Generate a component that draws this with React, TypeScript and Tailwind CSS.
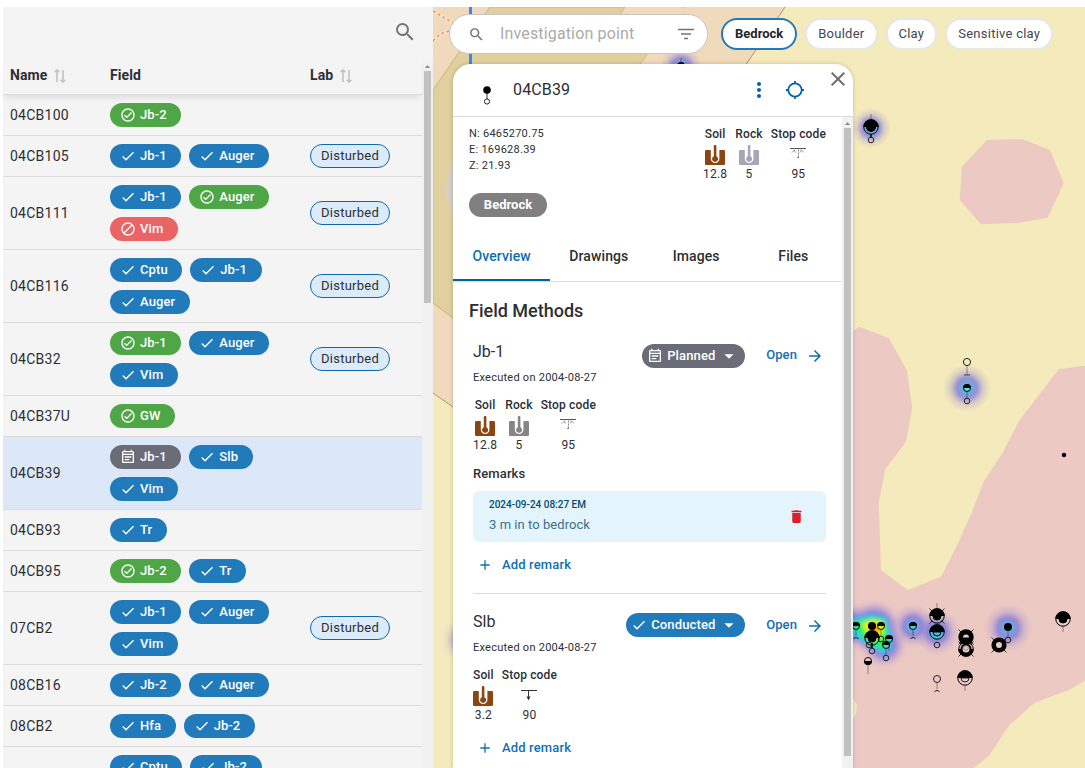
import React from "react";
import {
  MdSearch,
  MdCheck,
  MdOutlineEventNote,
  MdOutlineCheckCircle,
  MdArrowDropDown,
  MdArrowForward,
  MdAdd,
  MdDelete,
  MdClose,
  MdMoreVert,
} from "react-icons/md";

type Status = "done" | "approved" | "planned" | "rejected";
type Method = { label: string; status: Status };
type Row = { name: string; field: Method[]; lab?: string; selected?: boolean };

const m = (label: string, status: Status = "done"): Method => ({ label, status });

const rows: Row[] = [
  { name: "04CB100", field: [m("Jb-2", "approved")] },
  { name: "04CB105", field: [m("Jb-1"), m("Auger")], lab: "Disturbed" },
  { name: "04CB111", field: [m("Jb-1"), m("Auger", "approved"), m("Vim", "rejected")], lab: "Disturbed" },
  { name: "04CB116", field: [m("Cptu"), m("Jb-1"), m("Auger")], lab: "Disturbed" },
  { name: "04CB32", field: [m("Jb-1", "approved"), m("Auger"), m("Vim")], lab: "Disturbed" },
  { name: "04CB37U", field: [m("GW", "approved")] },
  { name: "04CB39", field: [m("Jb-1", "planned"), m("Slb"), m("Vim")], selected: true },
  { name: "04CB93", field: [m("Tr")] },
  { name: "04CB95", field: [m("Jb-2", "approved"), m("Tr")] },
  { name: "07CB2", field: [m("Jb-1"), m("Auger"), m("Vim")], lab: "Disturbed" },
  { name: "08CB16", field: [m("Jb-2"), m("Auger")] },
  { name: "08CB2", field: [m("Hfa"), m("Jb-2")] },
];

const lastRow: Method[] = [m("Cptu"), m("Jb-2")];

const chipColor: Record<Status, string> = {
  done: "bg-[#217bbb]",
  approved: "bg-[#4fa646]",
  planned: "bg-[#6a6d78]",
  rejected: "bg-[#ea6365]",
};

function StatusIcon({ status }: { status: Status }) {
  if (status === "done") return <MdCheck size={16} className="shrink-0" />;
  if (status === "approved") return <MdOutlineCheckCircle size={16} className="shrink-0" />;
  if (status === "planned") return <MdOutlineEventNote size={16} className="shrink-0" />;
  return (
    <svg viewBox="0 0 24 24" className="size-4 shrink-0" fill="currentColor">
      <path d="M12 2C6.500 2 2 6.500 2 12s4.500 10 10 10 10-4.500 10-10S17.500 2 12 2zM4 12c0-4.400 3.600-8 8-8 1.800 0 3.500.6 4.900 1.700L5.700 16.900C4.600 15.500 4 13.800 4 12zm8 8c-1.800 0-3.500-.6-4.900-1.700L18.300 7.100C19.400 8.500 20 10.200 20 12c0 4.400-3.600 8-8 8z" />
    </svg>
  );
}

function MethodChip({ label, status }: Method) {
  return (
    <span className={`flex h-6 items-center gap-1 rounded-full pl-2.5 pr-[14.5px] text-[13px] font-medium tracking-[0.1px] text-white ${chipColor[status]}`}>
      <StatusIcon status={status} />
      <span>{label}</span>
    </span>
  );
}

function SortIcon() {
  return (
    <svg viewBox="0 0 12 14" className="mt-[3px] h-3.5 w-3" fill="none" stroke="#c2c2c2" strokeWidth="1.6">
      <path d="M3 13V2M0.600 3.200L3 1l2.400 2.200M9 1v11M6.600 10.800L9 13l2.400-2.200" />
    </svg>
  );
}

function Scrollbar({ thumb }: { thumb: string }) {
  return (
    <div className="flex w-[11px] shrink-0 flex-col items-center bg-[#f1f1f1]">
      <svg viewBox="0 0 11 11" className="size-[11px] shrink-0">
        <path d="M3 8h5L5.500 5z" fill="#8a8a8a" />
      </svg>
      <div className={`w-[7px] bg-[#c1c1c1] ${thumb}`} />
    </div>
  );
}

function PointTable() {
  return (
    <aside className="flex h-full w-[430px] shrink-0 flex-col bg-[#f4f4f4]">
      <div className="flex h-[53px] shrink-0 justify-end pr-4 pt-[13px]">
        <MdSearch size={24} color="#757575" />
      </div>
      <div className="flex min-h-0 flex-1">
        <div className="flex min-w-0 flex-1 flex-col">
          <div className="relative z-10 flex h-[35px] shrink-0 items-center border-b border-[#dcdcdc] pb-[5px] text-sm font-bold tracking-[0.1px] text-[#2c2f33] shadow-[0_5px_6px_-2px_rgba(0,0,0,0.09)]">
            <div className="flex w-[107px] items-center gap-[7px] pl-[7px]">Name <SortIcon /></div>
            <div className="w-[200px]">Field</div>
            <div className="flex items-center gap-[7px]">Lab <SortIcon /></div>
          </div>
          <div className="min-h-0 flex-1 overflow-hidden">
            {rows.map((r) => (
              <div key={r.name} className={`flex items-center border-b border-[#dcdcdc] py-2 ${r.selected ? "bg-[#dce8f8]" : ""}`}>
                <div className="w-[107px] pb-px pl-[7px] text-sm leading-5 tracking-[0.25px] text-[#2c2f33]">{r.name}</div>
                <div className="flex w-[200px] flex-wrap gap-2 pr-4">
                  {r.field.map((f) => <MethodChip key={f.label} {...f} />)}
                </div>
                {r.lab && (
                  <span className="flex h-6 w-20 items-center justify-center rounded-full border border-[#1068a8] bg-[#dcebf9] text-[13px] tracking-[0.25px] text-[#2c2f33]">
                    {r.lab}
                  </span>
                )}
              </div>
            ))}
            <div className="flex gap-2 py-2 pl-[107px]">
              {lastRow.map((f) => <MethodChip key={f.label} {...f} />)}
            </div>
          </div>
        </div>
        <Scrollbar thumb="h-[232px]" />
      </div>
    </aside>
  );
}

type Glow = [number, number, number];
const glows: Glow[] = [
  [871, 128, 20], [967, 388, 24], [913, 626, 22], [937, 632, 23], [1008, 628, 24], [681, 67, 21],
];

function Half({ x, y, r, flip, fill = "none" }: { x: number; y: number; r: number; flip?: boolean; fill?: string }) {
  return (
    <g>
      <circle cx={x} cy={y} r={r - 0.5} fill={fill} stroke="#000" strokeWidth="1" />
      <path d={`M${x - r} ${y}A${r} ${r} 0 0 ${flip ? 0 : 1} ${x + r} ${y}Z`} fill="#000" />
    </g>
  );
}

function Ring({ x, y, r = 2.8 }: { x: number; y: number; r?: number }) {
  return <circle cx={x} cy={y} r={r} fill="none" stroke="#222" strokeWidth="1" />;
}

function Stem({ x, y1, y2 }: { x: number; y1: number; y2: number }) {
  return <path d={`M${x} ${y1}V${y2}`} stroke="#000" strokeOpacity="0.25" strokeWidth="1.500" />;
}

function Big({ x, y, fill = "none" }: { x: number; y: number; fill?: string }) {
  return (
    <g>
      <Half x={x} y={y} r={7.7} fill={fill} />
      <path d={`M${x - 4} ${y}a4 4 0 0 0 8 0z`} fill={fill === "none" ? "#000" : fill} stroke="#000" />
    </g>
  );
}

function Corners({ x, y }: { x: number; y: number }) {
  return (
    <path
      d={`M${x - 7.5} ${y - 7.5}l3 3M${x + 7.5} ${y - 7.5}l-3 3M${x - 7.5} ${y + 7.5}l3-3M${x + 7.5} ${y + 7.5}l-3-3`}
      stroke="#333"
      strokeWidth="1"
    />
  );
}

function MapCanvas() {
  return (
    <svg viewBox="433 7 652 761" className="absolute inset-0 h-full w-full" fill="none">
      <defs>
        <radialGradient id="glow">
          <stop offset="0" stopColor="#43c9e8" />
          <stop offset="0.2" stopColor="#5aa6e2" stopOpacity="0.9" />
          <stop offset="0.42" stopColor="#7a74dc" stopOpacity="0.75" />
          <stop offset="0.7" stopColor="#9184d8" stopOpacity="0.27" />
          <stop offset="1" stopColor="#9a90d8" stopOpacity="0" />
        </radialGradient>
        <filter id="soft5" x="-50%" y="-50%" width="200%" height="200%"><feGaussianBlur stdDeviation="5" /></filter>
        <filter id="soft3" x="-50%" y="-50%" width="200%" height="200%"><feGaussianBlur stdDeviation="2" /></filter>
      </defs>
      <rect x="433" y="7" width="652" height="761" fill="#f5eabb" />
      <path d="M433 7H785L745 66L600 280L453 407L433 393Z" fill="#f1dabb" />
      <path d="M785 7L745 66M433 393L453 407" stroke="#a89874" strokeWidth="1" />
      <path d="M490 7H625L618 17L664 31L640 64L453 318L433 303V90Z" fill="#e1d09e" stroke="#c9b581" strokeWidth="1" />
      <path d="M680 7h6l-3 2z" fill="#e1d09e" />
      <path d="M433 11L455 24M433 41C440 33 445 31 455 31" stroke="#fbe6d0" strokeWidth="3" />
      <path d="M433 11L455 24M433 41C440 33 445 31 455 31" stroke="#f58a58" strokeWidth="1.400" strokeDasharray="3 2.500" />
      <path d="M470.500 7V66" stroke="#3a87fb" strokeWidth="3" />
      <path d="M455 146L445.300 191L455 222Z" fill="#d6cfca" />
      <path d="M987 140L1022 139L1050 150L1063.700 183L1047.700 217.700L1017 223L981 224.300L959.700 200L962 166.700Z" fill="#edc9c4" />
      <path d="M850 333L859 326.700L888.700 338L907 370.700L912.300 408.300L905.700 442.300L885.300 469L878.700 502.700L881 570L907.700 590L941 576.700L956.300 546.700L971.700 512.700L983.700 481.300L1002.700 452.700L1018.700 421.300L1058.700 369.300L1085 365.700V680.700L1071 689L1034 703.300L1009 725.300L989.700 755L973.700 768H850V727L856 713L857 705L850 694Z" fill="#edc9c4" />

      {glows.map(([x, y, r]) => <circle key={`${x}-${y}`} cx={x} cy={y} r={r} fill="url(#glow)" />)}
      <circle cx="465" cy="640" r="15" fill="#7a74dc" fillOpacity="0.6" filter="url(#soft5)" />
      <g filter="url(#soft5)">
        <circle cx="874" cy="628" r="20" fill="#8377e0" />
        <circle cx="850" cy="626" r="15" fill="#8377e0" />
        <circle cx="884" cy="645" r="15" fill="#8377e0" />
      </g>
      <g filter="url(#soft3)">
        <path d="M850 619L872 614L886 617L891 632L892 650L882 654L864 642L850 636Z" fill="#3fc4f0" />
        <path d="M853 622L872 617L884 619L888 632L889 645L883 650L866 641L856 630Z" fill="#22f05a" />
        <path d="M862 623L872 620L883 622L883 633L878 640L868 636Z" fill="#e9f500" />
        <ellipse cx="875" cy="629" rx="5" ry="4.500" fill="#ff9a00" />
      </g>

      <Stem x={871} y1={114} y2={121} />
      <Big x={871} y={127} fill="#6aa9d8" />
      <circle cx="871" cy="127" r="5" fill="#000" />
      <path d="M871 134v4" stroke="#000" strokeWidth="1.500" />
      <Ring x={871} y={140} />

      <circle cx="681" cy="66" r="4" fill="#000" />
      <Stem x={681} y1={58} y2={63} />

      <Ring x={967} y={362} r={3.6} />
      <Stem x={967} y1={366} y2={375} />
      <path d="M964 375h6" stroke="#666" strokeWidth="1.500" />
      <Half x={967} y={388} r={4} fill="#4fe0dc" />
      <Stem x={967} y1={392} y2={398} />
      <Ring x={967} y={401} />
      <circle cx="1064" cy="455" r="2.200" fill="#000" />

      <Half x={856} y={626} r={4} fill="#2ee08a" />
      <Stem x={856} y1={630} y2={636} />
      <path d="M853.500 639a2.800 2.800 0 0 1 5 0" stroke="#222" />
      <circle cx="872" cy="626" r="4" fill="#000" />
      <Half x={881} y={626} r={4} fill="#d8f000" />
      <Stem x={881} y1={630} y2={636} />
      <Ring x={881} y={639} />
      <Half x={889} y={639} r={4} fill="#35d7b5" />
      <Stem x={889} y1={643} y2={651} />
      <Half x={886} y={645} r={4} fill="#30e8a0" />
      <Stem x={886} y1={649} y2={655} />
      <Ring x={886} y={658} />
      <Big x={872} y={638} />
      <Ring x={869} y={645} />
      <path d="M872 643v5" stroke="#000" strokeWidth="1.500" />
      <Ring x={872} y={651} />
      <Half x={868} y={661} r={4} flip fill="#edc9c4" />
      <Stem x={868} y1={665} y2={674} />

      <Half x={913} y={626} r={4} fill="#48c9e5" />
      <Stem x={913} y1={630} y2={636} />
      <path d="M910.500 639a2.800 2.800 0 0 1 5 0" stroke="#222" />

      <Stem x={937} y1={603} y2={610} />
      <Corners x={937} y={616} />
      <Big x={937} y={616} />
      <Big x={937} y={632} fill="#50b7e0" />
      <Ring x={937} y={645} />

      <Corners x={966} y={649} />
      <Half x={966} y={649} r={7.7} flip />
      <circle cx="966" cy="649" r="4.500" stroke="#000" strokeWidth="2" fill="#edc9c4" />
      <circle cx="966" cy="648" r="2.300" stroke="#777" strokeWidth="0.700" />
      <Corners x={966} y={637} />
      <circle cx="966" cy="637" r="7.700" fill="#000" />
      <path d="M963 637.500a3 3 0 0 1 6 0z" fill="#edc9c4" />

      <circle cx="1008" cy="627" r="4" fill="#000" />
      <Stem x={1008} y1={631} y2={637} />
      <Ring x={1008} y={640} />
      <Corners x={999} y={645} />
      <circle cx="999" cy="645" r="5.300" stroke="#000" strokeWidth="4.600" fill="#edc9c4" />

      <Big x={1063} y={619} />
      <Stem x={1063} y1={626} y2={632} />

      <Ring x={937} y={679} r={3.5} />
      <Stem x={937} y1={683} y2={689} />
      <path d="M934.500 692a2.800 2.800 0 0 1 5 0" stroke="#222" />
      <Half x={965} y={678} r={7.7} />
      <path d="M961 678a4 4 0 0 0 8 0z" fill="#edc9c4" stroke="#222" />
      <Stem x={965} y1={685} y2={691} />
    </svg>
  );
}

function DepthIcon({ color }: { color: string }) {
  return (
    <svg viewBox="0 0 20 20" className="size-5">
      <rect x="0" y="5" width="20" height="15" rx="1.200" fill={color} />
      <path d="M5.800 0V13.800a4.300 4.300 0 0 0 8.600 0V0z" fill="#fff" />
      <path d="M8.800 1.200a1.300 1.300 0 0 1 2.600 0V11.300a3 3 0 1 1-2.600 0z" fill={color} />
    </svg>
  );
}

function StopIcon({ code }: { code: string }) {
  return code === "90" ? (
    <svg viewBox="0 0 16 20" className="h-5 w-4" fill="none" stroke="#333">
      <path d="M0 4.500h16M7.500 4.500v7" />
      <path d="M5.500 10.500h4l-2 4z" fill="#333" stroke="none" />
    </svg>
  ) : (
    <svg viewBox="0 0 16 20" className="h-5 w-4" fill="none" stroke="#555">
      <path d="M0 3.500h16" />
      <path d="M2 7.500L5 4.500M4 5l1.500 2.500M14 7.500L11 4.500M11.500 5L10 7.500" strokeWidth="0.600" />
      <path d="M8.500 4.500v8M7 12.500h3" strokeWidth="0.700" strokeDasharray="2 1" />
    </svg>
  );
}

function Stat({ label, value, children }: { label: string; value: string; children: React.ReactNode }) {
  return (
    <div className="flex flex-col items-center text-xs leading-4 text-[#2c2f33]">
      <span className="font-medium tracking-[0.15px]">{label}</span>
      <span className="mb-px mt-[3px] flex h-5">{children}</span>
      <span className="tracking-[0.2px]">{value}</span>
    </div>
  );
}

function FieldMethod(props: {
  name: string;
  status: Status;
  statusLabel: string;
  chipClass: string;
  children: React.ReactNode;
  remark?: { at: string; text: string };
}) {
  return (
    <section className="ml-5 mr-4 h-[270px] border-b border-[#dcdcdc] pt-4 last:border-b-0">
      <div className="-mr-0.5 flex items-start">
        <div className="flex-1 text-[#2c2f33]">
          <h3 className="text-base leading-6">{props.name}</h3>
          <p className="mt-1.5 text-[11px] leading-4 tracking-[0.25px]">Executed on 2004-08-27</p>
        </div>
        <button className={`flex h-6 items-center rounded-full pl-[5px] text-[13px] font-medium tracking-[0.15px] text-white ${props.chipClass} ${chipColor[props.status]}`}>
          <StatusIcon status={props.status} />
          <span className="ml-1 flex-1 text-left">{props.statusLabel}</span>
          <MdArrowDropDown size={22} className="mr-[5px]" />
        </button>
        <button className="ml-[21px] mr-[5px] mt-1 flex h-6 items-center gap-[9px] text-[13px] font-medium tracking-[0.1px] text-[#1270ae]">
          <span className="pb-0.5">Open</span>
          <MdArrowForward size={18} className="-mr-px" />
        </button>
      </div>
      <div className="mt-[11px] flex gap-2">{props.children}</div>
      {props.remark && (
        <>
          <h4 className="mt-[13px] text-[13px] font-medium leading-4 tracking-[0.1px] text-[#2c2f33]">Remarks</h4>
          <div className="mt-[9px] flex h-[51px] items-center rounded-md bg-[#e3f4fd] pl-4 pr-[21px]">
            <div className="flex-1 pb-[3px]">
              <p className="text-[10px] font-medium leading-4 text-[#014b70]">{props.remark.at}</p>
              <p className="mt-[3px] text-[13px] leading-[18px] tracking-[0.05px] text-[#3c7089]">{props.remark.text}</p>
            </div>
            <MdDelete size={17} color="#db1f2d" />
          </div>
        </>
      )}
      <button className={`flex items-center gap-[9px] pl-1 text-[13px] font-medium leading-4 tracking-[0.15px] text-[#1270ae] ${props.remark ? "mt-[15px]" : "mt-[17px]"}`}>
        <MdAdd size={16} />
        <span>Add remark</span>
      </button>
    </section>
  );
}

const tabs = ["Overview", "Drawings", "Images", "Files"];

function DetailPanel() {
  return (
    <div className="relative ml-5 mt-[10px] flex min-h-0 w-[400px] flex-1 flex-col overflow-hidden rounded-t-[18px] bg-white shadow-[0_0_4px_rgba(0,0,0,0.2)]">
      <header className="flex h-[53px] shrink-0 items-start border-b border-[#dcdcdc]">
        <svg viewBox="0 0 10 20" className="ml-[29px] mt-[21px] h-5 w-2.5" fill="none">
          <path d="M5 8v8" stroke="#777" strokeWidth="1.500" />
          <circle cx="5" cy="5" r="3.800" fill="#000" />
          <circle cx="5" cy="16.500" r="2.600" stroke="#222" fill="#fff" />
        </svg>
        <h1 className="ml-[21px] mt-[14px] flex-1 text-base leading-6 tracking-[0.15px] text-[#2c2f33]">04CB39</h1>
        <MdMoreVert size={24} color="#0063a8" className="mt-[14px]" />
        <svg viewBox="0 0 20 20" className="ml-[14px] mt-4 size-5" fill="none" stroke="#0063a8" strokeWidth="1.800">
          <circle cx="10" cy="10" r="6.700" />
          <path d="M10 1v3M10 16v3M1 10h3M16 10h3" />
        </svg>
        <MdClose size={24} color="#6f6f6f" className="ml-[21px] mr-[3px] mt-[3px]" />
      </header>
      <div className="flex min-h-0 flex-1">
        <div className="flex min-w-0 flex-1 flex-col overflow-hidden">
          <div className="flex h-[76px] shrink-0 items-start justify-between pl-4 pr-4 pt-[9px]">
            <div className="text-[11px] leading-4 tracking-[0.25px] text-[#2c2f33]">
              <p>N: 6465270.75</p>
              <p>E: 169628.39</p>
              <p>Z: 21.93</p>
            </div>
            <div className="flex gap-2">
              <Stat label="Soil" value="12.8"><DepthIcon color="#8b4513" /></Stat>
              <Stat label="Rock" value="5"><DepthIcon color="#a5a7b4" /></Stat>
              <Stat label="Stop code" value="95"><StopIcon code="95" /></Stat>
            </div>
          </div>
          <span className="ml-4 flex h-6 w-[78px] shrink-0 items-center justify-center rounded-full bg-[#808080] text-[13px] font-bold text-white">Bedrock</span>
          <nav className="mt-[14px] grid h-[51px] shrink-0 grid-cols-4 border-b border-[#dcdcdc]">
            {tabs.map((t, i) => (
              <button
                key={t}
                className={`border-b-2 pt-0.5 text-sm font-medium tracking-[0.1px] ${i === 0 ? "border-[#0063a8] text-[#0f6cac]" : "border-transparent text-[#2c2f33]"}`}
              >
                {t}
              </button>
            ))}
          </nav>
          <h2 className="ml-4 mt-[17px] shrink-0 text-lg font-medium leading-6 text-[#2c2f33]">Field Methods</h2>
          <div className="mt-px flex flex-col">
            <FieldMethod
              name="Jb-1"
              status="planned"
              statusLabel="Planned"
              chipClass="w-[103px] mt-1"
              remark={{ at: "2024-09-24 08:27 EM", text: "3 m in to bedrock" }}
            >
              <Stat label="Soil" value="12.8"><DepthIcon color="#8b4513" /></Stat>
              <Stat label="Rock" value="5"><DepthIcon color="#858585" /></Stat>
              <Stat label="Stop code" value="95"><StopIcon code="95" /></Stat>
            </FieldMethod>
            <FieldMethod name="Slb" status="done" statusLabel="Conducted" chipClass="w-[119px] mt-[3px]">
              <Stat label="Soil" value="3.2"><DepthIcon color="#8b4513" /></Stat>
              <Stat label="Stop code" value="90"><StopIcon code="90" /></Stat>
            </FieldMethod>
          </div>
        </div>
        <Scrollbar thumb="h-[628px]" />
      </div>
    </div>
  );
}

const soilFilters = ["Bedrock", "Boulder", "Clay", "Sensitive clay"];

function MapView() {
  return (
    <main className="relative flex h-full min-w-0 flex-1 flex-col overflow-hidden pt-[7px]">
      <MapCanvas />
      <div className="relative flex shrink-0 items-center pl-[15.5px]">
        <div className="mr-[13px] flex h-10 w-[259.5px] items-center rounded-full border border-[#c6c6c9] bg-white pl-[18.5px] pr-[13px]">
          <MdSearch size={17} color="#707070" />
          <span className="ml-[15px] flex-1 text-base tracking-[0.15px] text-[#ababab]">Investigation point</span>
          <svg viewBox="0 0 16 12" className="h-3 w-4" stroke="#757575" strokeWidth="1.600">
            <path d="M0 1.500h16M3 6h10M6 10.500h4" />
          </svg>
        </div>
        <div className="flex gap-2">
          {soilFilters.map((f, i) => (
            <button
              key={f}
              className={`flex h-8 items-center whitespace-nowrap rounded-full border-2 bg-white text-[13px] ${
                i === 0 ? "border-[#217bbb] px-3 font-bold text-[#222529]" : "border-[#e5e6ea] px-[11px] tracking-[0.25px] text-[#44474b]"
              }`}
            >
              {f}
            </button>
          ))}
        </div>
      </div>
      <DetailPanel />
    </main>
  );
}

export default function App() {
  return (
    <div className="flex h-screen w-screen overflow-hidden bg-white pl-[3px] pt-[7px] font-[Roboto,sans-serif]">
      <PointTable />
      <MapView />
    </div>
  );
}
